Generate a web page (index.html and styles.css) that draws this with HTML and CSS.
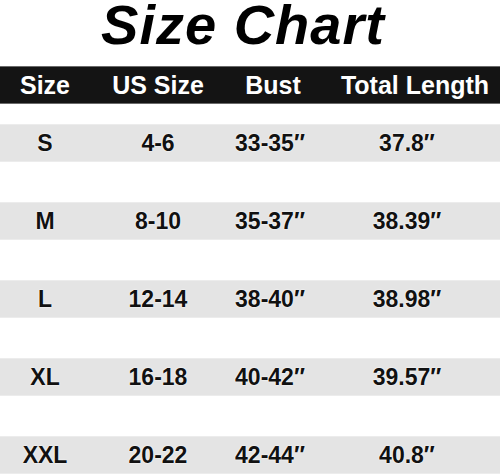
FILE: index.html
```html
<!DOCTYPE html>
<html>
<head>
<meta charset="utf-8">
<link rel="stylesheet" href="styles.css">
</head>
<body>
<div class="page">
  <h1 class="title">Size Chart</h1>
  <div class="row head">
    <div class="cell">Size</div>
    <div class="cell">US Size</div>
    <div class="cell bust-h">Bust</div>
    <div class="cell len-h">Total Length</div>
  </div>
  <div class="rows">
    <div class="row data"><div class="cell">S</div><div class="cell">4-6</div><div class="cell">33-35″</div><div class="cell">37.8″</div></div>
    <div class="row data"><div class="cell">M</div><div class="cell">8-10</div><div class="cell">35-37″</div><div class="cell">38.39″</div></div>
    <div class="row data"><div class="cell">L</div><div class="cell">12-14</div><div class="cell">38-40″</div><div class="cell">38.98″</div></div>
    <div class="row data"><div class="cell">XL</div><div class="cell">16-18</div><div class="cell">40-42″</div><div class="cell">39.57″</div></div>
    <div class="row data"><div class="cell">XXL</div><div class="cell">20-22</div><div class="cell">42-44″</div><div class="cell">40.8″</div></div>
  </div>
</div>
</body>
</html>
```

FILE: styles.css
```css
html, body {
  margin: 0;
  padding: 0;
  background: #fff;
}
.page {
  width: 500px;
  height: 476px;
  overflow: hidden;
  font-family: "Liberation Sans", Arial, sans-serif;
  font-weight: bold;
  color: #111;
}
.title {
  margin: 0 0 16px 0;
  padding-right: 14px;
  text-align: center;
  font-size: 56px;
  line-height: 50px;
  font-style: italic;
  font-weight: bold;
  letter-spacing: 1px;
  color: #000;
}
.row {
  display: grid;
  grid-template-columns: 90px 136px 88px 186px;
  align-items: center;
}
.cell {
  text-align: center;
  white-space: nowrap;
}
.head {
  height: 36px;
  background: #141414;
  border-top: 1px solid #6a6a6a;
  border-bottom: 1px solid #6a6a6a;
  color: #fff;
  font-size: 25px;
  line-height: 36px;
}
.bust-h {
  padding-left: 6px;
}
.len-h {
  padding-left: 16px;
}
.rows {
  display: flex;
  flex-direction: column;
  gap: 40px;
  padding-top: 20px;
}
.data {
  height: 36px;
  background: #e4e4e4;
  border-top: 1px solid #ececec;
  border-bottom: 1px solid #ececec;
  font-size: 23px;
  line-height: 36px;
  text-shadow: 0 0 2px #fff, 0 0 1px #fff;
}
```
